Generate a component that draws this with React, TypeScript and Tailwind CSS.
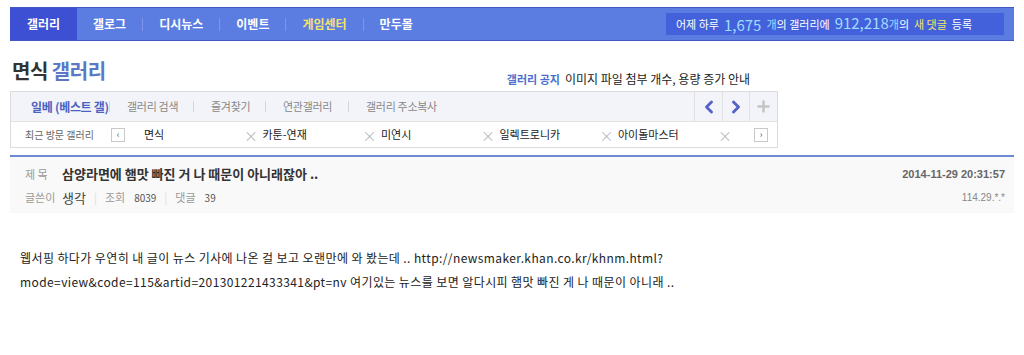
import { ChevronLeft, ChevronRight, Plus } from "lucide-react"

const kr = { fontFamily: '"Noto Sans CJK KR", "Noto Sans", sans-serif' }
const latin = { fontFamily: '"Liberation Sans", Arial, sans-serif' }

const topTabs = ["갤로그", "디시뉴스", "이벤트", "게임센터", "만두몰"]
const subTabs = [
  { t: "갤러리 검색", w: "w-[84px]" },
  { t: "즐겨찾기", w: "w-[72px]" },
  { t: "연관갤러리", w: "w-[83px]" },
  { t: "갤러리 주소복사", w: "w-[110px]" },
]
const recent = ["면식", "카툰-연재", "미연시", "일렉트로니카", "아이돌마스터"]

function TopBar() {
  return (
    <div className="mx-[10px] mt-[7px] flex h-[34px] w-[1004px] items-stretch border-y border-[#3f58c4] bg-[#5b7de2]">
      <div className="flex w-[67px] items-center justify-center bg-[#3d4fd2] text-[12px] font-bold text-white">갤러리</div>
      <div className="flex items-center">
        {topTabs.map((t, i) => (
          <div key={t} className="flex items-center">
            {i > 0 && <span className="h-[13px] w-px bg-[#7d96e8]" />}
            <span
              className={`px-[16px] text-[12px] font-bold ${t === "게임센터" ? "text-[#f4e36a]" : "text-white"}`}
            >
              {t}
            </span>
          </div>
        ))}
      </div>
      <div className="ml-auto mr-[10px] mt-[5px] flex h-[22px] w-[338px] items-center gap-[5px] bg-[#4461dc] pl-[10px] text-[11px] text-white">
        <span>어제 하루</span>
        <span className="text-[15px] leading-none text-[#9fdcff]">1,675</span>
        <span>
          <span className="text-[#9fdcff]">개</span>의 갤러리에
        </span>
        <span className="flex items-baseline">
          <span className="text-[15px] leading-none text-[#9fdcff]">912,218</span>
          <span className="text-[#9fdcff]">개</span>의
        </span>
        <span className="text-[#f4e36a]">새 댓글</span>
        <span>등록</span>
      </div>
    </div>
  )
}

function GalleryBox() {
  return (
    <div className="mx-[10px] w-[768px] border border-[#dcdcdc]">
      <div className="flex h-[30px] items-stretch border-b border-[#e2e2e2] bg-[#f3f4f9]">
        <div className="flex items-center pl-[20px]">
          <span className="w-[78px] text-[12px] font-bold tracking-[-0.3px] text-[#4a62c2]">일베 (베스트 갤)</span>
          {subTabs.map(({ t, w }) => (
            <div key={t} className={`flex items-center ${w}`}>
              <span className="h-[11px] w-px bg-[#d6d6d6]" />
              <span className="pl-[17px] text-[11px] tracking-[-0.3px] text-[#888]">{t}</span>
            </div>
          ))}
        </div>
        <div className="ml-auto flex">
          <div className="flex w-[28px] items-center justify-center border-l border-[#e0e0e0]">
            <ChevronLeft size={20} strokeWidth={3.5} className="text-[#5563c8]" />
          </div>
          <div className="flex w-[27px] items-center justify-center border-l border-[#e0e0e0]">
            <ChevronRight size={20} strokeWidth={3.5} className="text-[#5563c8]" />
          </div>
          <div className="flex w-[28px] items-center justify-center border-l border-[#e0e0e0]">
            <Plus size={17} strokeWidth={3.5} className="text-[#c4c4c4]" />
          </div>
        </div>
      </div>
      <div className="flex h-[25px] items-center bg-white">
        <span className="w-[100px] pl-[14px] text-[10px] text-[#666]">최근 방문 갤러리</span>
        <span className="flex h-[14px] w-[14px] items-center justify-center border border-[#c8c8c8] text-[9px] text-[#555]">
          ‹
        </span>
        <div className="ml-[19px] flex">
          {recent.map((r) => (
            <div key={r} className="flex w-[118.5px] items-center">
              <span className="w-[100px] text-[11px] text-[#222]">{r}</span>
              <span className="text-[14px] font-light leading-none text-[#aaa]">×</span>
            </div>
          ))}
        </div>
        <span className="ml-auto mr-[9px] flex h-[14px] w-[14px] items-center justify-center border border-[#c8c8c8] text-[9px] text-[#555]">
          ›
        </span>
      </div>
    </div>
  )
}

export default function App() {
  return (
    <div className="h-[355px] w-[1024px] overflow-hidden bg-white" style={kr}>
      <TopBar />
      <div className="mx-[10px] mt-[18px] flex w-[768px] items-end">
        <h1 className="pl-[2px] text-[20px] font-bold leading-[24px] tracking-[-0.5px] text-[#333]">
          면식 <span className="text-[#5a78c6]">갤러리</span>
        </h1>
        <div className="ml-auto mb-[-5px] mr-[28px] flex items-center gap-[5px]">
          <span className="text-[11px] font-bold text-[#4a6fd0]">갤러리 공지</span>
          <span className="text-[12px] text-[#222]">이미지 파일 첨부 개수, 용량 증가 안내</span>
        </div>
      </div>
      <div className="mt-[8px]">
        <GalleryBox />
      </div>
      <div className="mx-[10px] mt-[7px] w-[1004px] border-t-2 border-[#6f8ad2] bg-[#f9f9f9] pb-[6px] pl-[15px] pr-[9px] pt-[7px]">
        <div className="flex items-center justify-between">
          <div className="flex items-center">
            <span className="w-[37px] text-[11px] text-[#999]">제 목</span>
            <span className="text-[13px] font-bold text-[#333]">삼양라면에 햄맛 빠진 거 나 때문이 아니래잖아 ..</span>
          </div>
          <span className="text-[11px] font-bold text-[#666]" style={latin}>
            2014-11-29 20:31:57
          </span>
        </div>
        <div className="mt-[4px] flex items-center justify-between">
          <div className="flex items-center text-[11px] text-[#999]">
            <span className="w-[37px]">글쓴이</span>
            <span className="text-[13px] text-[#444]">생각</span>
            <span className="mx-[8px] text-[#ddd]">|</span>
            <span>조회</span>
            <span className="ml-[9px] text-[10px] text-[#555]">8039</span>
            <span className="mx-[8px] text-[#ddd]">|</span>
            <span>댓글</span>
            <span className="ml-[9px] text-[10px] text-[#555]">39</span>
          </div>
          <span className="text-[10px] text-[#888]" style={latin}>
            114.29.*.*
          </span>
        </div>
      </div>
      <div className="mx-[20px] mt-[33px] text-[12px] leading-[24px] tracking-[0.4px] text-[#222]">
        <p>웹서핑 하다가 우연히 내 글이 뉴스 기사에 나온 걸 보고 오랜만에 와 봤는데 .. http://newsmaker.khan.co.kr/khnm.html?</p>
        <p>mode=view&amp;code=115&amp;artid=201301221433341&amp;pt=nv 여기있는 뉴스를 보면 알다시피 햄맛 빠진 게 나 때문이 아니래 ..</p>
      </div>
    </div>
  )
}
